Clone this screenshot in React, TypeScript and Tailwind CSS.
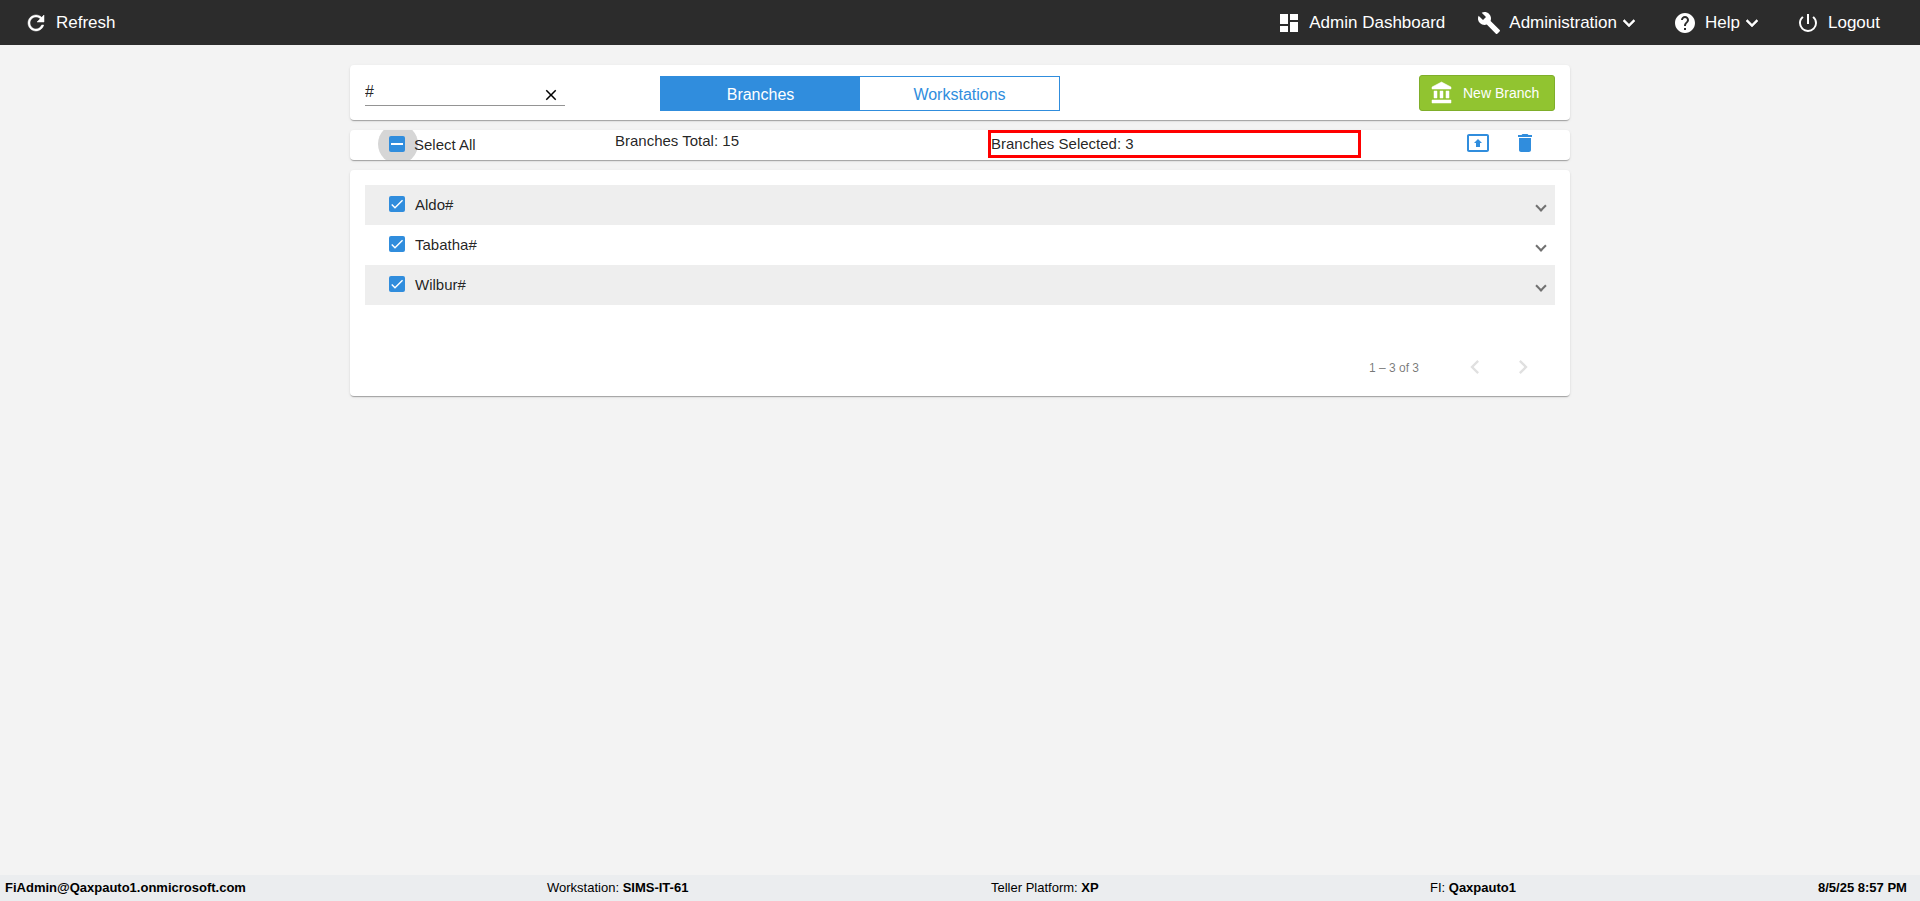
import { useState } from "react";
import {
  MdBuild,
  MdChevronLeft,
  MdChevronRight,
  MdClose,
  MdDashboard,
  MdDelete,
  MdHelp,
  MdPowerSettingsNew,
  MdPresentToAll,
} from "react-icons/md";

const branches = ["Aldo#", "Tabatha#", "Wilbur#"];

const cardShadow =
  "shadow-[0_2px_1px_-1px_rgba(0,0,0,0.2),0_1px_1px_0_rgba(0,0,0,0.1),0_1px_3px_0_rgba(0,0,0,0.1)]";

function Icon({ d, bold }: { d: string; bold?: boolean }) {
  return (
    <svg
      viewBox="0 0 24 24"
      className="w-6 h-6 shrink-0"
      fill="currentColor"
      stroke={bold ? "currentColor" : "none"}
      strokeWidth="0.5"
    >
      <path d={d} />
    </svg>
  );
}

const refreshPath =
  "M17.65 6.35C16.2 4.9 14.21 4 12 4c-4.42 0-7.99 3.58-7.99 8s3.57 8 7.99 8c3.73 0 6.84-2.55 7.73-6h-2.08c-.82 2.33-3.04 4-5.65 4-3.31 0-6-2.69-6-6s2.69-6 6-6c1.66 0 3.14.69 4.22 1.78L13 11h7V4l-2.35 2.35z";
const expandPath = "M16.59 8.59L12 13.17 7.41 8.59 6 10l6 6 6-6z";
const bankPath =
  "M4 10v7h3v-7H4zm6 0v7h3v-7h-3zM2 22h19v-3H2v3zm14-12v7h3v-7h-3zm-4.5-9L2 6v2h19V6l-9.5-5z";

function Checkbox({ state }: { state: "checked" | "mixed" | "empty" }) {
  return (
    <span
      className={`relative block w-4 h-4 rounded-[2px] shrink-0 ${
        state === "empty" ? "border-2 border-black/54" : "bg-[#308ddd]"
      }`}
    >
      {state === "checked" && (
        <svg viewBox="0 0 24 24" className="block w-4 h-4" fill="none">
          <path
            d="M4.1 12.7L9 17.6 20.3 6.3"
            stroke="white"
            strokeWidth="2.13"
          />
        </svg>
      )}
      {state === "mixed" && (
        <span className="absolute left-[2px] top-[7px] w-3 h-[2px] bg-white" />
      )}
    </span>
  );
}

function Header() {
  return (
    <header className="flex items-center h-[45px] bg-[#2c2c2c] text-white text-[17px] leading-6 pl-6 pr-10 pt-px">
      <button className="flex items-center">
        <Icon d={refreshPath} bold />
        <span className="ml-2">Refresh</span>
      </button>
      <nav className="flex items-center ml-auto">
        <button className="flex items-center">
          <MdDashboard size={24} />
          <span className="ml-2">Admin Dashboard</span>
        </button>
        <button className="flex items-center ml-8">
          <MdBuild size={24} />
          <span className="ml-2">Administration</span>
          <Icon d={expandPath} bold />
        </button>
        <button className="flex items-center ml-8">
          <MdHelp size={24} />
          <span className="ml-2">Help</span>
          <Icon d={expandPath} bold />
        </button>
        <button className="flex items-center ml-8">
          <MdPowerSettingsNew size={24} />
          <span className="ml-2">Logout</span>
        </button>
      </nav>
    </header>
  );
}

function Footer() {
  return (
    <footer className="flex h-[26px] bg-[#ebedef] text-black text-[13px] leading-[25px] pl-[5px] whitespace-nowrap">
      <div className="w-[542px] font-bold">FiAdmin@Qaxpauto1.onmicrosoft.com</div>
      <div className="w-[444px]">
        Workstation: <b>SIMS-IT-61</b>
      </div>
      <div className="w-[439px]">
        Teller Platform: <b>XP</b>
      </div>
      <div className="w-[388px]">
        FI: <b>Qaxpauto1</b>
      </div>
      <div className="font-bold">8/5/25 8:57 PM</div>
    </footer>
  );
}

export default function App() {
  const [search, setSearch] = useState("#");
  const [tab, setTab] = useState("Branches");
  const [selected, setSelected] = useState<string[]>(branches);

  const toggle = (name: string) =>
    setSelected(
      selected.includes(name)
        ? selected.filter((n) => n !== name)
        : [...selected, name]
    );

  return (
    <div className="flex flex-col h-screen bg-[#f3f3f3] text-black/87 font-['Liberation_Sans',Arial,sans-serif]">
      <Header />

      <main className="flex-1 w-[1220px] mx-auto pt-5">
        <section
          className={`flex items-start h-[55px] bg-white rounded px-[15px] pt-2.5 ${cardShadow}`}
        >
          <div className="flex items-center w-[200px] h-[31px] border-b border-[#949494]">
            <input
              value={search}
              onChange={(e) => setSearch(e.target.value)}
              className="w-[177px] h-[30px] pt-[3px] text-base outline-none"
            />
            <button className="text-black mt-2.5" onClick={() => setSearch("")}>
              <MdClose size={18} />
            </button>
          </div>

          <div className="flex w-[400px] h-[35px] ml-[95px] mt-px border border-[#308ddd]">
            {["Branches", "Workstations"].map((name) => (
              <button
                key={name}
                onClick={() => setTab(name)}
                className={`flex-1 h-[33px] text-base leading-8 pt-0.5 ${
                  tab === name ? "bg-[#308ddd] text-white" : "text-[#308ddd]"
                }`}
              >
                {name}
              </button>
            ))}
          </div>

          <button className="flex items-center w-[136px] h-9 ml-auto pl-2.5 rounded-[3px] border border-[#7fae2a] bg-[#91c430] text-white text-sm">
            <Icon d={bankPath} bold />
            <span className="ml-[9px]">New Branch</span>
          </button>
        </section>

        <section
          className={`flex items-start h-[30px] mt-2.5 bg-white rounded overflow-hidden text-[15px] ${cardShadow}`}
        >
          <button
            className="relative flex w-[265px] pl-[39px] pt-1.5"
            onClick={() => setSelected(selected.length ? [] : branches)}
          >
            <span className="absolute left-7 -top-[6px] w-10 h-10 rounded-full bg-[#d6d6d6]" />
            <Checkbox state={selected.length ? "mixed" : "empty"} />
            <span className="relative ml-[9px] leading-[18px]">Select All</span>
          </button>
          <div className="w-[373px] leading-[22px]">Branches Total: 15</div>
          <div className="w-[373px] h-7 border-[3px] border-[#ff0000] leading-[22px]">
            Branches Selected: {selected.length}
          </div>
          <div className="flex text-[#308ddd] ml-[105px] mt-px gap-[23px]">
            <MdPresentToAll size={24} />
            <MdDelete size={24} />
          </div>
        </section>

        <section
          className={`h-[226px] mt-2.5 bg-white rounded p-[15px] ${cardShadow}`}
        >
          {branches.map((name) => (
            <div
              key={name}
              onClick={() => toggle(name)}
              className="flex h-10 pl-6 pr-[10px] pt-[11px] text-[15px] leading-[18px] odd:bg-[#eee]"
            >
              <Checkbox state={selected.includes(name) ? "checked" : "empty"} />
              <span className="ml-2.5">{name}</span>
              <span className="ml-auto mt-1.5 w-2 h-2 rotate-45 border-r-2 border-b-2 border-[#707070]" />
            </div>
          ))}

          <div className="flex items-center justify-end mt-12 pr-[18px] h-7 text-xs text-black/54">
            <span className="mr-[42px] pt-0.5">
              1 – 3 of {branches.length}
            </span>
            <MdChevronLeft size={28} className="text-[#e0e0e0]" />
            <MdChevronRight size={28} className="ml-5 text-[#e0e0e0]" />
          </div>
        </section>
      </main>

      <Footer />
    </div>
  );
}
